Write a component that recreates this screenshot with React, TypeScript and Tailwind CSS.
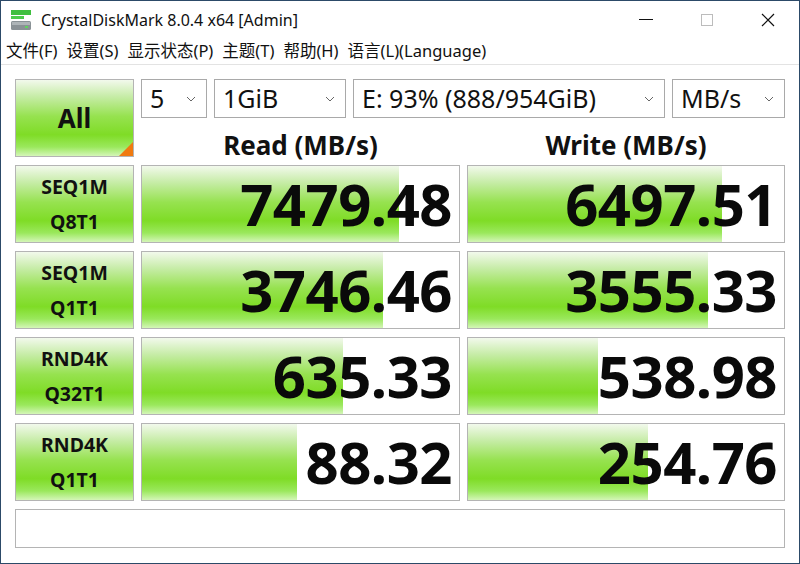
import React from 'react';

const rows = [
  { l1: 'SEQ1M', l2: 'Q8T1', read: '7479.48', readW: 257, write: '6497.51', writeW: 254 },
  { l1: 'SEQ1M', l2: 'Q1T1', read: '3746.46', readW: 241, write: '3555.33', writeW: 240 },
  { l1: 'RND4K', l2: 'Q32T1', read: '635.33', readW: 201, write: '538.98', writeW: 130 },
  { l1: 'RND4K', l2: 'Q1T1', read: '88.32', readW: 155, write: '254.76', writeW: 180 },
];

const green =
  'bg-[linear-gradient(to_bottom,#f2f9ec_0%,#c6ecA6_22%,#96e24f_48%,#7fdc26_72%,#9ae85c_88%,#d4f6b8_100%)]';

function Chevron() {
  return (
    <svg width="10" height="6" viewBox="0 0 10 6" className="text-[#666]">
      <path d="M1 1 L5 5 L9 1" fill="none" stroke="currentColor" strokeWidth="1" />
    </svg>
  );
}

function Select({ value, w }: { value: string; w: string }) {
  return (
    <div className={`${w} h-[39px] flex items-center justify-between border border-[#a9a9a9] bg-white pl-[8px] pr-[10px]`}>
      <span className="text-[25px] text-[#111] leading-none">{value}</span>
      <Chevron />
    </div>
  );
}

function Cell({ value, width }: { value: string; width: number }) {
  return (
    <div className="relative h-[78px] border border-[#b4b4b4] bg-white overflow-hidden">
      <div className={`absolute left-0 top-0 bottom-0 ${green}`} style={{ width }} />
      <div className="relative h-full flex items-center justify-end pr-[7px]">
        <span className="font-bold text-[58px] leading-none tracking-[-0.5px] text-[#0a0a0a]">{value}</span>
      </div>
    </div>
  );
}

export default function App() {
  return (
    <div
      className="w-[800px] h-[564px] bg-white border border-[#2c4a68] flex flex-col overflow-hidden"
      style={{ fontFamily: '"Noto Sans", "Noto Sans CJK SC", sans-serif' }}
    >
      {/* title bar */}
      <div className="h-[37px] flex items-center shrink-0">
        <svg width="22" height="24" viewBox="0 0 22 24" className="ml-[9px]">
          <rect x="1" y="2" width="20" height="5" fill="#3fbf3f" />
          <rect x="1" y="8" width="13" height="3" fill="#4ccc4c" />
          <rect x="1" y="13" width="20" height="9" rx="1.5" fill="#8a9296" />
          <rect x="2" y="14" width="18" height="3" fill="#aeb5b8" />
          <rect x="15" y="18" width="3" height="2" fill="#5fd35f" />
        </svg>
        <span className="ml-[9px] text-[16px] text-[#111]">CrystalDiskMark 8.0.4 x64 [Admin]</span>
        <div className="ml-auto flex items-center h-full">
          <div className="w-[60px] flex justify-center">
            <div className="w-[14px] h-[1.5px] bg-[#111]" />
          </div>
          <div className="w-[62px] flex justify-center">
            <div className="w-[12px] h-[12px] border border-[#bcbcbc]" />
          </div>
          <div className="w-[60px] flex justify-center mr-[1px]">
            <svg width="14" height="14" viewBox="0 0 14 14">
              <path d="M1 1 L13 13 M13 1 L1 13" stroke="#111" strokeWidth="1.2" />
            </svg>
          </div>
        </div>
      </div>

      {/* menu */}
      <div className="h-[27px] flex items-center gap-[9px] pl-[5px] text-[16.5px] text-[#111] border-b border-[#e3e3e3] shrink-0">
        <span>文件(F)</span>
        <span>设置(S)</span>
        <span>显示状态(P)</span>
        <span>主题(T)</span>
        <span>帮助(H)</span>
        <span>语言(L)(Language)</span>
      </div>

      {/* body */}
      <div className="pt-[14px] pl-[14px] pr-[14px] grid grid-cols-[119px_319px_318px] gap-x-[7px] gap-y-[8px] auto-rows-[78px]">
        <div className={`relative border border-[#b4b4b4] ${green} flex items-center justify-center`}>
          <span className="font-bold text-[26px] text-[#111]">All</span>
          <div className="absolute right-0 bottom-0 w-0 h-0 border-l-[14px] border-l-transparent border-b-[14px] border-b-[#f07a10]" />
        </div>
        <div className="col-span-2 flex flex-col">
          <div className="flex gap-[7px]">
            <Select value="5" w="w-[66px]" />
            <Select value="1GiB" w="w-[132px]" />
            <Select value="E: 93% (888/954GiB)" w="w-[312px]" />
            <Select value="MB/s" w="w-[113px]" />
          </div>
          <div className="flex-1 grid grid-cols-[319px_318px] gap-x-[7px] pt-[14px]">
            <div className="flex items-center justify-center font-bold text-[26px] leading-none text-[#111]">Read (MB/s)</div>
            <div className="flex items-center justify-center font-bold text-[26px] leading-none text-[#111]">Write (MB/s)</div>
          </div>
        </div>

        {rows.map((r, i) => (
          <React.Fragment key={i}>
            <div className={`border border-[#b4b4b4] ${green} flex flex-col items-center justify-center gap-[16px] font-bold text-[19.5px] leading-none text-[#111]`}>
              <span>{r.l1}</span>
              <span>{r.l2}</span>
            </div>
            <Cell value={r.read} width={r.readW} />
            <Cell value={r.write} width={r.writeW} />
          </React.Fragment>
        ))}

        <div className="col-span-3 h-[39px] border border-[#b4b4b4] bg-white" />
      </div>
    </div>
  );
}
